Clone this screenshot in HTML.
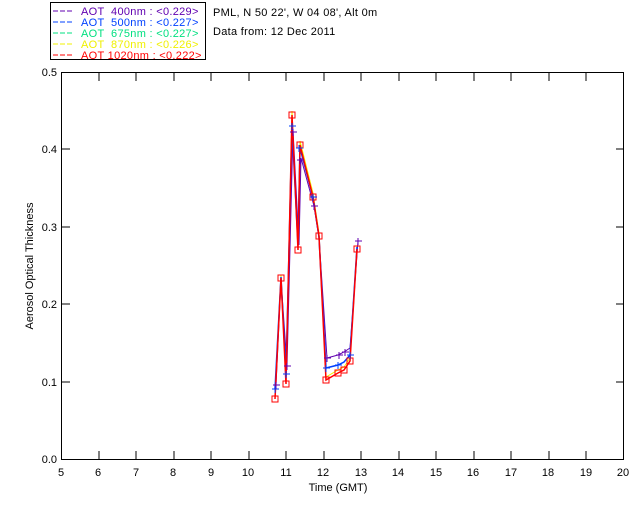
<!DOCTYPE html>
<html><head><style>
html,body{margin:0;padding:0;background:#fff;width:640px;height:512px;overflow:hidden}
svg{display:block}
text{font-family:"Liberation Sans",sans-serif;font-size:11px;white-space:pre}
</style></head><body>
<svg width="640" height="512" xmlns="http://www.w3.org/2000/svg" xml:space="preserve">
<rect x="50.5" y="2.5" width="155" height="57" fill="#fff" stroke="#000"/>
<g font-size="11" letter-spacing="0.3">
<line x1="53" y1="11" x2="73" y2="11" stroke="#6000b0" stroke-dasharray="5,2"/><text x="81" y="15" fill="#6000b0">AOT  400nm : &lt;0.229&gt;</text>
<line x1="53" y1="22" x2="73" y2="22" stroke="#0040ff" stroke-dasharray="5,2"/><text x="81" y="26" fill="#0040ff">AOT  500nm : &lt;0.227&gt;</text>
<line x1="53" y1="33" x2="73" y2="33" stroke="#00e080" stroke-dasharray="5,2"/><text x="81" y="37" fill="#00e080">AOT  675nm : &lt;0.227&gt;</text>
<line x1="53" y1="44" x2="73" y2="44" stroke="#f0f000" stroke-dasharray="5,2"/><text x="81" y="48" fill="#f0f000">AOT  870nm : &lt;0.226&gt;</text>
<line x1="53" y1="55" x2="73" y2="55" stroke="#ff0000" stroke-dasharray="5,2"/><text x="81" y="59" fill="#ff0000">AOT 1020nm : &lt;0.222&gt;</text>
</g>
<text x="213" y="16" letter-spacing="0.3">PML, N 50 22', W 04 08', Alt 0m</text>
<text x="213" y="35" letter-spacing="0.3">Data from: 12 Dec 2011</text>
<rect x="61.5" y="72.5" width="562" height="387" fill="none" stroke="#000"/>
<g stroke="#000">
<path d="M99 459v-8M136 459v-8M174 459v-8M211 459v-8M249 459v-8M286 459v-8M324 459v-8M361 459v-8M399 459v-8M436 459v-8M474 459v-8M511 459v-8M549 459v-8M586 459v-8
M99 73v8M136 73v8M174 73v8M211 73v8M249 73v8M286 73v8M324 73v8M361 73v8M399 73v8M436 73v8M474 73v8M511 73v8M549 73v8M586 73v8
M62 382h8M62 304h8M62 227h8M62 149h8M616 382h8M616 304h8M616 227h8M616 149h8"/>
</g>
<g text-anchor="middle" font-size="11">
<text x="61" y="476">5</text><text x="98" y="476">6</text><text x="136" y="476">7</text><text x="173" y="476">8</text><text x="211" y="476">9</text><text x="248" y="476">10</text><text x="286" y="476">11</text><text x="323" y="476">12</text><text x="361" y="476">13</text><text x="398" y="476">14</text><text x="436" y="476">15</text><text x="473" y="476">16</text><text x="511" y="476">17</text><text x="548" y="476">18</text><text x="586" y="476">19</text><text x="623" y="476">20</text>
<text x="338" y="491">Time (GMT)</text>
</g>
<g text-anchor="end" font-size="11">
<text x="57" y="463">0.0</text><text x="57" y="386">0.1</text><text x="57" y="308">0.2</text><text x="57" y="231">0.3</text><text x="57" y="153">0.4</text><text x="57" y="76">0.5</text>
</g>
<text transform="translate(33,266) rotate(-90)" text-anchor="middle" font-size="11">Aerosol Optical Thickness</text>
<polyline fill="none" stroke="#f0f000" stroke-width="1" points="275,396 281,275 286,381 292,111 298,247 300,141 313,193 319,233 326,377 338,370 344,367 350,358 357,246"/>
<polyline fill="none" stroke="#6000b0" stroke-width="1" points="276,385 281,280 287,366 293,130 299,245 301,158 314,206 319,238 327,358 338,355 344,352 350,348 358,241"/>
<polyline fill="none" stroke="#0040ff" stroke-width="1.5" points="275,389 281,277 286,374 292,126 298,245 300,148 313,197 319,237 326,368 338,365 344,362 350,355 357,247"/>
<polyline fill="none" stroke="#ff0000" stroke-width="1.5" points="275,399 281,278 286,384 292,115 298,250 300,145 313,197 319,236 326,380 338,373 344,370 350,361 357,249"/>
<g fill="none" stroke="#ff0000">
<rect x="272" y="396" width="6" height="6"/><rect x="278" y="275" width="6" height="6"/><rect x="283" y="381" width="6" height="6"/><rect x="289" y="112" width="6" height="6"/><rect x="295" y="247" width="6" height="6"/><rect x="297" y="142" width="6" height="6"/><rect x="310" y="194" width="6" height="6"/><rect x="316" y="233" width="6" height="6"/><rect x="323" y="377" width="6" height="6"/><rect x="335" y="370" width="6" height="6"/><rect x="341" y="367" width="6" height="6"/><rect x="347" y="358" width="6" height="6"/><rect x="354" y="246" width="6" height="6"/>
</g>
<g stroke="#0040ff">
<path d="M272 389h7M275 386v7M289 126h7M292 123v7M310 197h7M313 194v7M323 368h7M326 365v7M335 365h7M338 362v7M347 355h7M350 352v7M283 374h7M286 371v7M296 148h7M299 145v7"/>
</g>
<g stroke="#6000b0">
<path d="M273 385h7M276 382v7M290 132h7M293 129v7M297 160h7M300 157v7M311 206h7M314 203v7M324 358h7M327 355v7M336 355h7M339 352v7M342 352h7M345 349v7M355 241h7M358 238v7M284 366h7M287 363v7"/>
</g>
</svg>
</body></html>
